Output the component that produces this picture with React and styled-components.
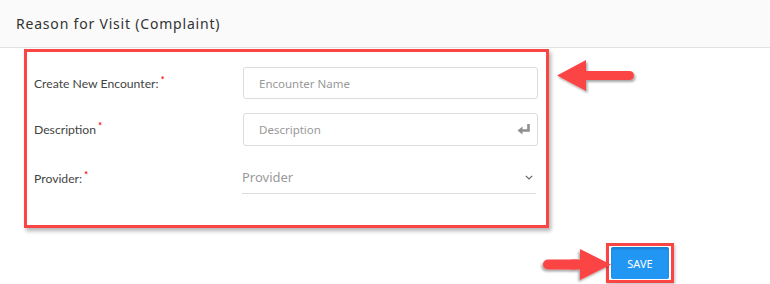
import styled, { createGlobalStyle } from 'styled-components';

const GlobalStyle = createGlobalStyle`
  html, body {
    margin: 0;
    padding: 0;
    background: #fff;
  }

  body {
    font-family: 'Noto Sans', 'Open Sans', sans-serif;
    color: #444;
  }
`;

const RED = '#fb4545';

function Required() {
  return <Star>*</Star>;
}

function EnterIcon() {
  return (
    <svg width='14' height='11' viewBox='0 0 14 11'>
      <path d='M11.5 0v6.5H5' fill='none' stroke='#8f8f8f' strokeWidth='2.6' />
      <path d='M0.5 6.5L5.5 2.5v8z' fill='#8f8f8f' />
    </svg>
  );
}

function Chevron() {
  return (
    <svg width='8' height='5' viewBox='0 0 8 5'>
      <path d='M0.8 0.8L4 4l3.2-3.2' fill='none' stroke='#666' strokeWidth='1.2' />
    </svg>
  );
}

function Arrow({ width, height, head, shaft, flip }) {
  const mid = height / 2;
  const half = shaft / 2;
  return (
    <svg
      width={width + 4}
      height={height + 4}
      viewBox={`0 0 ${width + 4} ${height + 4}`}
      style={{ transform: flip ? 'scaleX(-1)' : undefined }}
    >
      <defs>
        <filter id={`sh${width}`} x='-20%' y='-20%' width='140%' height='160%'>
          <feDropShadow dx='1.5' dy='2' stdDeviation='1.2' floodColor='#000' floodOpacity='0.35' />
        </filter>
      </defs>
      <g filter={`url(#sh${width})`}>
        <path d={`M0 ${mid} L${head} 0 V${height} Z`} fill={RED} />
        <rect x={head - 1} y={mid - half} width={width - head - 1} height={shaft} rx={half} fill={RED} />
        <rect x={head - 1} y={mid - half} width={half * 2} height={shaft} fill={RED} />
      </g>
    </svg>
  );
}

export default function App() {
  return (
    <Page>
      <GlobalStyle />
      <Header>
        <Title>Reason for Visit (Complaint)</Title>
      </Header>

      <Body>
        <Highlight>
          <FormGrid>
            <Label>
              Create New Encounter: <Required />
            </Label>
            <InputBox>
              <Placeholder>Encounter Name</Placeholder>
            </InputBox>

            <Label>
              Description <Required />
            </Label>
            <InputBox>
              <Placeholder>Description</Placeholder>
              <EnterIcon />
            </InputBox>

            <Label>
              Provider: <Required />
            </Label>
            <SelectBox>
              <SelectText>Provider</SelectText>
              <Chevron />
            </SelectBox>
          </FormGrid>
        </Highlight>

        <Pointer $top={60} $left={557}>
          <Arrow width={79} height={31} head={29} shaft={9} />
        </Pointer>

        <Footer>
          <ButtonHighlight>
            <SaveButton>SAVE</SaveButton>
          </ButtonHighlight>
        </Footer>

        <Pointer $top={249} $left={537}>
          <Arrow width={70} height={31} head={31} shaft={10} flip />
        </Pointer>
      </Body>
    </Page>
  );
}

const Page = styled.div`
  width: 770px;
  height: 284px;
  overflow: hidden;
`;

const Header = styled.div`
  height: 47px;
  display: flex;
  align-items: center;
  padding-left: 16px;
  background: #fafafa;
  border-bottom: 1px solid #e2e2e2;
`;

const Title = styled.h2`
  margin: 0;
  font-family: 'Noto Sans', sans-serif;
  font-size: 14px;
  font-weight: 400;
  letter-spacing: 0.8px;
  color: #333;
`;

const Body = styled.div`
  position: relative;
  padding: 1px 0 0 24px;
`;

const Highlight = styled.div`
  width: 525px;
  height: 179px;
  box-sizing: border-box;
  border: 3px solid ${RED};
  box-shadow: 2px 3px 4px rgba(0, 0, 0, 0.3);
  padding: 15px 8px 0 7px;
`;

const FormGrid = styled.div`
  display: grid;
  grid-template-columns: 209px 295px;
  grid-auto-rows: 32px;
  row-gap: 14px;
  align-items: center;

  & > :nth-child(4) {
    height: 33px;
  }

  & > :nth-child(5),
  & > :nth-child(6) {
    margin-top: 5px;
  }
`;

const Label = styled.div`
  font-family: Lato, 'Noto Sans', sans-serif;
  font-size: 12.2px;
  color: #444;
  white-space: nowrap;
`;

const Star = styled.sup`
  color: #f00;
  font-size: 9px;
  font-weight: 700;
  position: relative;
  top: 0;
  margin-left: -1px;
`;

const InputBox = styled.div`
  height: 32px;
  box-sizing: border-box;
  border: 1px solid #dcdcdc;
  border-radius: 3px;
  display: flex;
  align-items: center;
  justify-content: space-between;
  padding: 0 6px 0 15px;
`;

const Placeholder = styled.span`
  font-size: 11.5px;
  color: #999;
`;

const SelectBox = styled.div`
  height: 32px;
  margin-left: -1px;
  margin-right: 2px;
  box-sizing: border-box;
  border-bottom: 1px solid #dcdcdc;
  display: flex;
  align-items: center;
  justify-content: space-between;
  padding: 0 3px 0 0;
`;

const SelectText = styled.span`
  font-size: 13px;
  color: #9a9a9a;
`;

const Footer = styled.div`
  display: flex;
  justify-content: flex-end;
  padding: 15px 96px 0 0;
`;

const ButtonHighlight = styled.div`
  border: 3px solid ${RED};
  padding: 1px 2px;
  box-shadow: 1px 2px 3px rgba(0, 0, 0, 0.25);
`;

const SaveButton = styled.button`
  width: 58px;
  height: 32px;
  border: none;
  border-radius: 2px;
  background: #2196f3;
  box-shadow: inset 0 2px 2px rgba(0, 0, 0, 0.15);
  color: #fff;
  font-family: 'Noto Sans', sans-serif;
  font-size: 11px;
  display: block;
  padding: 0;
`;

const Pointer = styled.div`
  position: absolute;
  top: ${(p) => p.$top - 48}px;
  left: ${(p) => p.$left}px;
  line-height: 0;
`;
